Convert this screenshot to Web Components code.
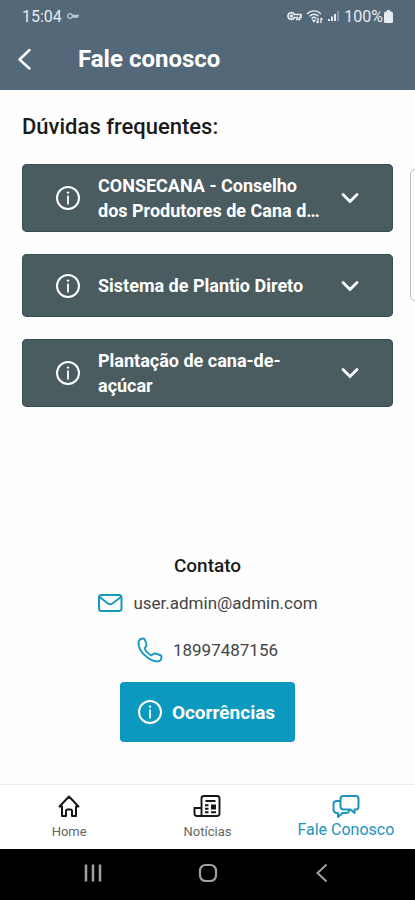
<!DOCTYPE html>
<html lang="pt-BR">
<head>
<meta charset="utf-8">
<meta name="viewport" content="width=device-width, initial-scale=1">
<title>Fale conosco</title>
<style>
    body{
        margin: 0;
        font-family: Roboto, "Liberation Sans", sans-serif;
        background-color: #fefefe;
        color: #1b1b1b;
    }
</style>
</head>
<body>
<contact-app>
    <status-bar slot="top" time="15:04" battery="100%"></status-bar>
    <app-header slot="top">Fale conosco</app-header>

    <faq-carousel>
        <span slot="title">Dúvidas frequentes:</span>
        <faq-item>CONSECANA - Conselho dos Produtores de Cana de Açúcar</faq-item>
        <faq-item>Sistema de Plantio Direto</faq-item>
        <faq-item>Plantação de cana-de-açúcar</faq-item>
    </faq-carousel>

    <contact-info email="user.admin@admin.com" phone="18997487156">Contato</contact-info>

    <tab-bar slot="bottom">
        <tab-item icon="home">Home</tab-item>
        <tab-item icon="news">Notícias</tab-item>
        <tab-item icon="chat" active>Fale Conosco</tab-item>
    </tab-bar>
    <system-bar slot="bottom"></system-bar>
</contact-app>

<script>
// every icon is drawn with currentColor, so the parent decides the colour
const icons = {
    key: `<svg viewBox="0 0 14 8" width="14" height="8" fill="none" stroke="currentColor" stroke-width="1.3" opacity=".75"><circle cx="4" cy="4" r="2.3"/><path d="M6.500 3.500H13M6.500 5H12"/></svg>`,
    vpn: `<svg viewBox="0 0 15 10" width="15" height="10" fill="none" stroke="currentColor" stroke-width="1.700"><path d="M7.500 3.500C6 .8 1 1 1 5s5 4.200 6.500 1.500H10V8.500h2.500v-2H14v-3z"/><circle cx="4.500" cy="5" r=".9"/></svg>`,
    wifi: `<svg viewBox="0 0 17 15" width="17" height="15" fill="none" stroke="currentColor" stroke-width="1.400"><path d="M1 5C5 .8 11 .8 15 5M3.500 7.300c2.700-2.800 6.300-2.800 9 0M5.500 9.500c1.700-1.600 3.300-1.600 5 0"/><path d="M6.500 10.500L8 12.500l1.500-2M12 14V9M10.500 12.500L12 14M15 9v5M16.500 10.500L15 9"/></svg>`,
    signal: `<svg viewBox="0 0 13 12" width="13" height="12" fill="currentColor"><path d="M1 9h2v2H1zM4 6.500h2V11H4zM7 4h2v7H7z"/><path d="M10 1h2v10h-2z" opacity=".35"/></svg>`,
    battery: `<svg viewBox="0 0 9 13" width="9" height="13" fill="currentColor"><path d="M3 0h3v1.500h1.500Q9 2 9 3.500v8Q9 13 7.500 13h-6Q0 13 0 11.500v-8Q0 2 1.500 1.500H3z"/></svg>`,
    back: `<svg viewBox="0 0 16 24" width="16" height="24" fill="none" stroke="currentColor" stroke-width="2.500" stroke-linecap="round" stroke-linejoin="round"><path d="M13.500 3L3.500 12.500l10 9"/></svg>`,
    info: `<svg viewBox="0 0 26 26" width="26" height="26" fill="none" stroke="currentColor" stroke-width="2"><circle cx="13" cy="13" r="11"/><path d="M13 10.500v9" stroke-width="1.800"/><circle cx="13" cy="7.600" r="1.200" fill="currentColor" stroke="none"/></svg>`,
    down: `<svg viewBox="0 0 18 12" width="18" height="12" fill="none" stroke="currentColor" stroke-width="2.800" stroke-linecap="round"><path d="M2 2.500l7 7 7-7"/></svg>`,
    mail: `<svg viewBox="0 0 26 20" width="26" height="20" fill="none" stroke="currentColor" stroke-width="2" stroke-linejoin="round"><rect x="2" y="2" width="22.500" height="16" rx="2.500"/><path d="M2.500 4L11 10.500q2.200 1.600 4.400 0L24 4"/></svg>`,
    phone: `<svg viewBox="0 0 26 26" width="26" height="26" fill="none" stroke="currentColor" stroke-width="1.900" stroke-linejoin="round"><path d="M2 3.500Q3.500 1.500 6 1.500q1.500 0 2 1.500l1.500 4.500q.3 1.300-.7 2.200-1.500 1.300-.8 2.600 1.800 3.700 5.500 5.700 1.200.6 2.500-.8 1-1 2.200-.7l4.800 1.500q1.500.5 1.500 2 0 4.500-4.500 4.500-6.500-.5-12.300-6.300Q1.500 12.500 1.500 6q0-1.500.5-2.500z"/></svg>`,
    home: `<svg viewBox="0 0 24 24" width="24" height="24" fill="none" stroke="currentColor" stroke-width="2" stroke-linejoin="round" stroke-linecap="round"><path d="M2.500 12.500L12 2.500l9.500 10H19V22h-4v-5q0-1.500-1.500-1.500h-3Q9 15.500 9 17v5H5v-9.500z"/></svg>`,
    news: `<svg viewBox="0 0 28 24" width="28" height="24" fill="none" stroke="currentColor" stroke-width="1.900"><path d="M8.500 22V4.500Q8.500 2 11 2h13q2.500 0 2.500 2.500v15q0 2.500-2.500 2.500H4q-2.500 0-2.500-2.500V14h7"/><path d="M12.500 7h10M12 11.200h3.500M12 14.700h3.500M12 18.200h3.500M18 18.200h5"/><path d="M18 10.500h5v5h-5z" fill="currentColor" stroke="none"/></svg>`,
    chat: `<svg viewBox="0 0 28 24" width="28" height="24" fill="none" stroke="currentColor" stroke-width="2" stroke-linejoin="round"><path d="M11.500 2H24q2.500 0 2.500 3v7.500q0 3-2.500 3h-1.500v3.500l-4-3.500h-7q-3 0-3-3V5q0-3 3-3z"/><path d="M8.500 7H5Q1.500 7 1.500 10v5.500q0 3 3 3.500H6v4l4.500-4h4q2 0 3-3"/></svg>`,
    recents: `<svg viewBox="0 0 20 20" width="20" height="20" stroke="currentColor" stroke-width="2.500"><path d="M3 1.500v17M10 1.500v17M17 1.500v17"/></svg>`,
    circle: `<svg viewBox="0 0 20 20" width="20" height="20" fill="none" stroke="currentColor" stroke-width="2.200"><rect x="2" y="2" width="16" height="16" rx="5.500"/></svg>`,
    sysback: `<svg viewBox="0 0 20 20" width="20" height="20" fill="none" stroke="currentColor" stroke-width="2"><path d="M14.500 1.500L5.500 10l9 8.500"/></svg>`
};

// shared by the elements that only need a template and their attributes
class BaseElement extends HTMLElement {
    constructor(){
        super();
        this.attachShadow({mode:"open"});
    }

    connectedCallback(){
        const template = document.createElement("template");
        template.innerHTML = `<style>
            *{ box-sizing: border-box; }
            svg{ display: block; flex: none; }
            button{ font: inherit; color: inherit; background: none; border: 0; padding: 0; cursor: pointer; }
        </style>` + this.render();
        this.shadowRoot.appendChild(template.content.cloneNode(true));
        this.ready();
    }

    ready(){}
}

// PAGE SHELL
class ContactApp extends BaseElement {
    render(){
        return `
<style>
:host{
    display: flex;
    flex-direction: column;
    min-height: 100vh;
}
main{
    flex: 1;
    display: flex;
    flex-direction: column;
    justify-content: space-between;
}
</style>
<slot name="top"></slot>
<main><slot></slot></main>
<slot name="bottom"></slot>`;
    }
}

class StatusBar extends BaseElement {
    render(){
        return `
<style>
:host{
    display: flex;
    align-items: center;
    justify-content: space-between;
    height: 32px;
    padding: 0 22px;
    background-color: #536879;
    color: #e6ebf0;
    font-size: 16px;
}
div{
    display: flex;
    align-items: center;
    gap: 4px;
}
.level{
    gap: 1px;
}
</style>
<div><span>${this.getAttribute("time")}</span>${icons.key}</div>
<div>${icons.vpn}${icons.wifi}${icons.signal}<div class="level"><span>${this.getAttribute("battery")}</span>${icons.battery}</div></div>`;
    }
}

class AppHeader extends BaseElement {
    render(){
        return `
<style>
:host{
    display: block;
    background-color: #536879;
    color: white;
}
header{
    display: flex;
    align-items: center;
    gap: 46px;
    height: 58px;
    padding: 0 16px 4px;
}
h1{
    margin: 0;
    font-size: 24px;
    font-weight: 700;
}
</style>
<header>
    <button aria-label="Voltar">${icons.back}</button>
    <h1><slot></slot></h1>
</header>`;
    }
}

// FAQ
class FaqCarousel extends BaseElement {
    render(){
        return `
<style>
:host{
    display: block;
    padding-top: 24px;
}
h2{
    margin: 0 22px 24px;
    font-size: 22px;
    line-height: 26px;
    font-weight: 500;
}
.track{
    display: flex;
    gap: 17px;
    padding-left: 22px;
    overflow: hidden;
}
.slide{
    flex: none;
    width: calc(100% - 22px);
    display: flex;
    flex-direction: column;
    gap: 22px;
}
.next{
    flex: none;
    align-self: flex-start;
    width: calc(100% - 22px);
    height: 132px;
    margin-top: 5px;
    border: 1px solid #bdbdbd;
    border-radius: 5px;
}
</style>
<h2><slot name="title"></slot></h2>
<div class="track">
    <div class="slide"><slot></slot></div>
    <div class="next"></div>
</div>`;
    }
}

class FaqItem extends BaseElement {
    render(){
        return `
<style>
:host{
    display: block;
}
button{
    display: flex;
    align-items: center;
    width: 100%;
    min-height: 63px;
    padding: 9px 34px 9px 33px;
    border-radius: 5px;
    background-color: #4a5c5f;
    box-shadow: inset 0 0 0 1px #36504f;
    color: white;
    text-align: left;
}
.text{
    flex: 1;
    margin: 0 20px 0 17px;
    font-size: 18px;
    line-height: 25px;
    font-weight: 700;
    display: -webkit-box;
    -webkit-box-orient: vertical;
    -webkit-line-clamp: 2;
    overflow: hidden;
}
</style>
<button aria-expanded="false">
    ${icons.info}
    <span class="text"><slot></slot></span>
    ${icons.down}
</button>`;
    }

    ready(){
        const button = this.shadowRoot.querySelector("button");
        button.onclick = () => {
            const open = button.getAttribute("aria-expanded") === "true";
            button.setAttribute("aria-expanded", String(!open));
        };
    }
}

// CONTACT
class ContactInfo extends BaseElement {
    render(){
        const email = this.getAttribute("email");
        const phone = this.getAttribute("phone");
        return `
<style>
:host{
    display: flex;
    flex-direction: column;
    align-items: center;
    padding: 24px 22px 42px;
}
h2{
    margin: 0 0 12px;
    font-size: 19px;
    line-height: 24px;
    font-weight: 500;
}
a{
    display: flex;
    align-items: center;
    gap: 10px;
    height: 26px;
    color: #444;
    font-size: 17px;
    text-decoration: none;
}
a + a{
    margin: 21px 0 19px;
}
a svg{
    color: #1599c0;
}
button{
    display: flex;
    align-items: center;
    gap: 9px;
    height: 60px;
    padding: 0 20px 0 17px;
    border-radius: 4px;
    background-color: #0c99bf;
    color: white;
    font-size: 19px;
    font-weight: 700;
}
</style>
<h2><slot></slot></h2>
<a href="mailto:${email}">${icons.mail}<span>${email}</span></a>
<a href="tel:${phone}">${icons.phone}<span>${phone}</span></a>
<button>${icons.info}<span>Ocorrências</span></button>`;
    }
}

// BOTTOM BARS
class TabBar extends BaseElement {
    render(){
        return `
<style>
nav{
    display: grid;
    grid-template-columns: repeat(3, 1fr);
    height: 65px;
    border-top: 1px solid #ececec;
    background-color: white;
}
</style>
<nav><slot></slot></nav>`;
    }
}

class TabItem extends BaseElement {
    render(){
        return `
<style>
:host{
    color: #151515;
}
a{
    display: flex;
    flex-direction: column;
    align-items: center;
    gap: 5px;
    padding-top: 9px;
    color: inherit;
    text-decoration: none;
}
span{
    font-size: 13px;
    line-height: 18px;
    color: #666;
}
:host([active]){
    color: #1d94bd;
}
:host([active]) a{
    gap: 3px;
}
:host([active]) span{
    font-size: 16px;
    color: inherit;
}
</style>
<a href="#${this.getAttribute("icon")}">${icons[this.getAttribute("icon")]}<span><slot></slot></span></a>`;
    }
}

class SystemBar extends BaseElement {
    render(){
        return `
<style>
:host{
    display: flex;
    align-items: center;
    justify-content: space-between;
    height: 51px;
    padding: 0 20% 3px;
    box-sizing: border-box;
    background-color: black;
    color: #a0a0a0;
}
</style>
<button aria-label="Recentes">${icons.recents}</button>
<button aria-label="Início">${icons.circle}</button>
<button aria-label="Voltar">${icons.sysback}</button>`;
    }
}

customElements.define("contact-app", ContactApp)
customElements.define("status-bar", StatusBar)
customElements.define("app-header", AppHeader)
customElements.define("faq-carousel", FaqCarousel)
customElements.define("faq-item", FaqItem)
customElements.define("contact-info", ContactInfo)
customElements.define("tab-bar", TabBar)
customElements.define("tab-item", TabItem)
customElements.define("system-bar", SystemBar)
</script>
</body>
</html>
